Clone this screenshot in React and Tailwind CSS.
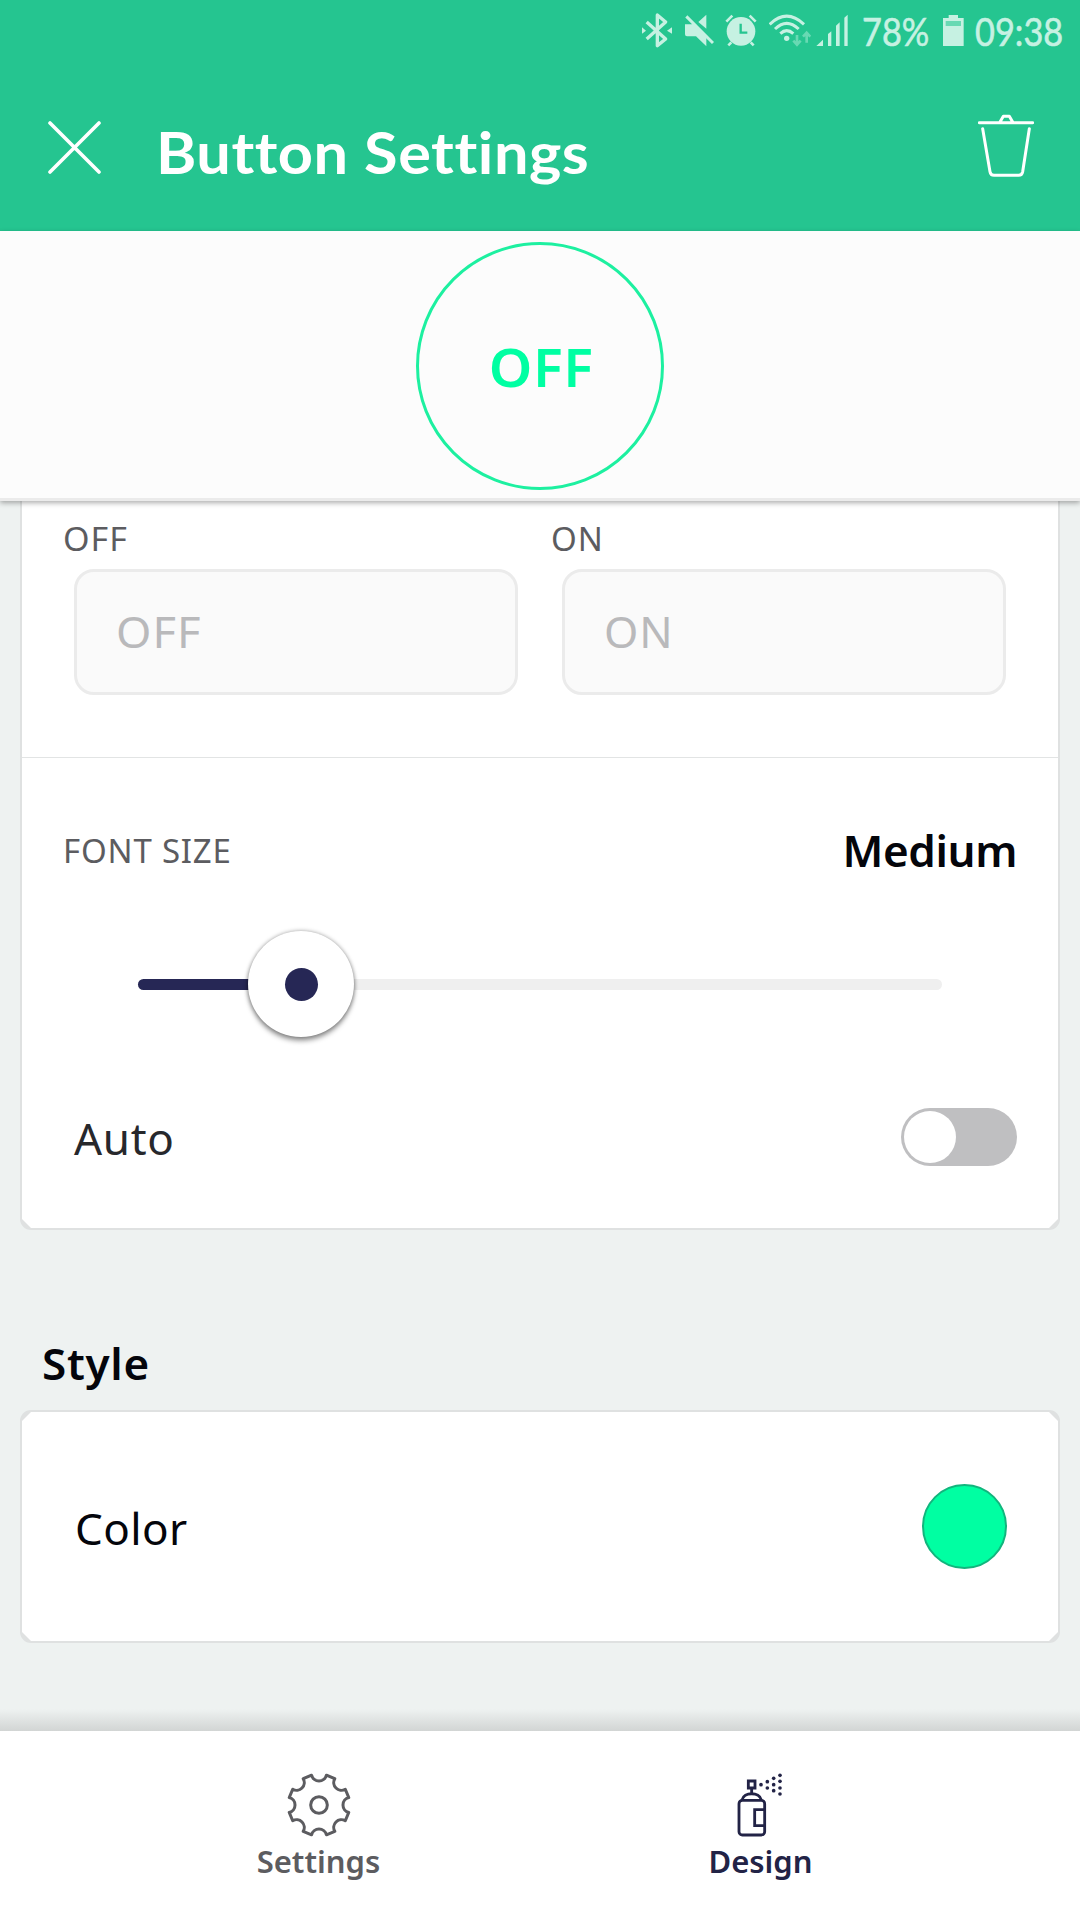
import React from "react";

const NOTO = "font-['Noto_Sans',sans-serif] leading-none whitespace-nowrap";

function StatusBar() {
  return (
    <div className="flex h-[62px] items-start pl-[642px] pt-[13px] text-[#c6f1e2]">
      <svg className="h-9 w-[30px] shrink-0" viewBox="36 39 90 108" fill="none" stroke="currentColor" strokeWidth="10">
        <path d="M50 66 L107 117 L82 137 V45 L107 66 L50 117" strokeLinejoin="round" />
        <path d="M36 82 L48 92 L36 101Z M126 82 L111 92 L126 101Z" fill="currentColor" stroke="none" />
      </svg>
      <svg className="ml-3 h-9 w-[30px] shrink-0" viewBox="162 39 90 108">
        <path d="M165 73 H184 L192 71 L229 108 V139 L198 109 H171 Q165 109 165 103Z M229 44 V86 L205 66Z" fill="currentColor" />
        <path d="M169 49 L249 129" stroke="currentColor" strokeWidth="9" />
      </svg>
      <svg className="ml-[11px] h-9 w-8 shrink-0" viewBox="285 39 96 108" fill="none" stroke="currentColor">
        <circle cx="333" cy="94" r="43" fill="currentColor" stroke="none" />
        <path d="M289 65 L307 47 M377 65 L359 47 M304 127 L295 136 M362 127 L371 136" strokeWidth="8" />
        <path d="M332 71 V98 H352" stroke="#25c590" strokeWidth="7" />
      </svg>
      <svg className="ml-3 h-9 w-[42px] shrink-0" viewBox="417 39 126 108" fill="none" stroke="currentColor">
        <path d="M419 73 Q470 24 522 73 M435 87 Q470 53 506 87 M451 101 Q470 83 490 101" strokeWidth="9" />
        <circle cx="470" cy="115" r="8" fill="currentColor" stroke="none" />
        <path d="M501 105 V132 M490 122 L501 134 L512 122 M530 128 V100 M519 110 L530 98 L541 110" stroke="#68d9b3" strokeWidth="8" />
      </svg>
      <svg className="ml-[5px] h-9 w-[33px] shrink-0" viewBox="558 39 99 108" fill="currentColor">
        <path d="M559 138 L579 119 V138Z M594 102 L604 94 V138 H594Z M618 77 L629 67 V138 H618Z M643 53 L653 44 V138 H643Z" />
      </svg>
      <span className="-mt-px ml-[13px] w-20 origin-left scale-x-[0.88] font-[Lato,sans-serif] text-[39px] leading-[38px] [-webkit-text-stroke:0.6px_#c6f1e2]">78%</span>
      <svg className="h-9 w-[23px] shrink-0" viewBox="936 39 69 108" fill="currentColor">
        <path d="M956 54 V45 H984 V54 H1001 V138 H939 V54Z" />
        <path d="M947 63 H993 V78 H947Z" fill="#68d9b3" />
      </svg>
      <span className="-mt-px ml-[10px] origin-left scale-x-[0.88] font-[Lato,sans-serif] text-[39px] leading-[38px] [-webkit-text-stroke:0.6px_#c6f1e2]">09:38</span>
    </div>
  );
}

function Header() {
  return (
    <header className="h-[231px] bg-[#25c590]">
      <StatusBar />
      <div className="flex h-[169px] items-start px-12">
        <svg className="mt-[59px] size-[53px]" viewBox="0 0 53 53" stroke="white" strokeWidth="3.6" strokeLinecap="round">
          <path d="M2 2 L51 51 M51 2 L2 51" />
        </svg>
        <h1 className="ml-[55px] mt-[62px] origin-left scale-x-[1.075] whitespace-nowrap font-[Lato,sans-serif] text-[57px] font-bold leading-none tracking-[0.5px] text-white">Button Settings</h1>
        <svg className="ml-auto mr-[-2px] mt-[51px] h-[66px] w-[56px]" viewBox="114 69 168 198" fill="none" stroke="white" strokeWidth="9" strokeLinecap="round" strokeLinejoin="round">
          <path d="M118 98 H278 M180 96 L190 79 H208 L218 96 M128 116 L150 245 Q152 256 162 256 H236 Q246 256 248 245 L268 116" />
        </svg>
      </div>
    </header>
  );
}

function Preview() {
  return (
    <section className="relative z-10 flex h-[270px] items-start justify-center border-b-[3px] border-[#ebebeb] bg-[#fcfcfc] pt-[11px] shadow-[0_2px_5px_rgba(0,0,0,0.32)]">
      <div className="flex size-[248px] justify-center rounded-full border-[3px] border-[#1df0a0] pt-[95px]">
        <span className={`${NOTO} scale-x-[1.045] pl-[2px] text-[53px] font-semibold tracking-[0.5px] text-[#00ffa2]`}>OFF</span>
      </div>
    </section>
  );
}

function LabelledInput({ label, placeholder, spacing }) {
  return (
    <div className="w-[453px]">
      <div className={`${NOTO} text-[33px] text-[#5c5c60] ${spacing}`}>{label}</div>
      <div className="ml-[11px] mt-[14px] flex h-[126px] w-[444px] rounded-[20px] border-[3px] border-[#ebebeb] bg-[#fafafa] pl-[39px] pt-[37px]">
        <span className={`${NOTO} text-[44px] text-[#b9b9bb] ${spacing}`}>{placeholder}</span>
      </div>
    </div>
  );
}

function SizeSlider() {
  return (
    <div className="relative ml-[116px] mt-[59px] flex h-[106px] w-[804px] items-center">
      <div className="flex h-[11px] w-full rounded-full bg-[#efefef]">
        <div className="h-full w-[163px] rounded-l-full bg-[#262755]" />
      </div>
      <div className="absolute left-[110px] top-0 flex size-[106px] items-center justify-center rounded-full bg-white shadow-[0_4px_5px_rgba(0,0,0,0.36),0_0_4px_rgba(0,0,0,0.36)]">
        <div className="size-[33px] rounded-full bg-[#262755]" />
      </div>
    </div>
  );
}

function TextCard() {
  return (
    <section className="mx-5 h-[729px] rounded-b-[11px] bg-[#dfe1e1] px-[2px] pb-[2px]">
      <div className="h-full bg-white [clip-path:polygon(0_0,100%_0,100%_calc(100%-9px),calc(100%-9px)_100%,9px_100%,0_calc(100%-9px))]">
        <div className="flex h-[257px] gap-[35px] border-b border-[#e2e4e4] pl-[41px] pt-[21px]">
          <LabelledInput label="OFF" placeholder="OFF" spacing="origin-left scale-x-[1.03] tracking-[1px]" />
          <LabelledInput label="ON" placeholder="ON" spacing="tracking-[1px]" />
        </div>
        <div className="flex items-start justify-between pl-[41px] pr-[41px]">
          <span className={`${NOTO} mt-[76px] text-[33px] tracking-[0.8px] text-[#5c5c60]`}>FONT SIZE</span>
          <span className={`${NOTO} mt-[70px] text-[44px] font-semibold tracking-[-0.4px] text-[#04050b]`}>Medium</span>
        </div>
        <SizeSlider />
        <div className="mt-[71px] flex items-start justify-between pl-[52px] pr-[41px]">
          <span className={`${NOTO} mt-[8px] text-[44px] tracking-[0.7px] text-[#27282c]`}>Auto</span>
          <div className="h-[58px] w-[116px] rounded-full bg-[#bfbfc1] p-[3px]">
            <div className="size-[52px] rounded-full bg-white" />
          </div>
        </div>
      </div>
    </section>
  );
}

function StyleCard() {
  return (
    <section className="mx-5 h-[233px] rounded-[11px] bg-[#dfe1e1] p-[2px]">
      <div className="flex h-full items-start justify-between bg-white pl-[53px] pr-[51px] [clip-path:polygon(9px_0,calc(100%-9px)_0,100%_9px,100%_calc(100%-9px),calc(100%-9px)_100%,9px_100%,0_calc(100%-9px),0_9px)]">
        <span className={`${NOTO} mt-[94px] text-[44px] tracking-[0.4px] text-[#04050b]`}>Color</span>
        <div className="mt-[72px] size-[85px] rounded-full border-2 border-[#12b57d] bg-[#00ffa2]" />
      </div>
    </section>
  );
}

// Gear outline: eight teeth separated by concave notches, centred on the origin.
const gearPoint = (deg) => {
  const a = (deg * Math.PI) / 180;
  return `${(92 * Math.sin(a)).toFixed(1)} ${(-92 * Math.cos(a)).toFixed(1)}`;
};
const GEAR =
  [0, 45, 90, 135, 180, 225, 270, 315]
    .map((d, i) => `${i ? "L" : "M"}${gearPoint(d - 14)} A23 23 0 0 0 ${gearPoint(d + 14)}`)
    .join(" ") + "Z";

const SPRAY_DOTS = [[246, 222], [265, 213], [265, 232], [284, 203], [284, 222], [284, 240], [303, 194], [303, 212], [303, 232], [303, 250]];

function BottomNav() {
  return (
    <nav className="flex h-[189px] bg-white pl-[98px] pt-[42px]">
      <div className="flex w-[441px] flex-col items-center">
        <svg className="size-16" viewBox="-96 -96 192 192" fill="none" stroke="#5c5c60" strokeWidth="9" strokeLinejoin="round">
          <path d={GEAR} />
          <circle r="25" />
        </svg>
        <span className={`${NOTO} mt-[9px] text-[31px] font-semibold text-[#5c5c60]`}>Settings</span>
      </div>
      <div className="flex w-[443px] flex-col items-center">
        <svg className="-ml-px h-16 w-[48px]" viewBox="171 187 144 192" fill="none" stroke="#222346" strokeWidth="8.5">
          <path d="M208 211 H228 V232 H208Z M218 235 V249 M189 268 C194 243 242 243 247 268 M257 297 H227 V345 H257" />
          <rect x="180" y="269" width="77" height="104" rx="10" />
          {SPRAY_DOTS.map(([x, y]) => (
            <circle key={`${x}-${y}`} cx={x} cy={y} r="5.5" fill="#222346" stroke="none" />
          ))}
        </svg>
        <span className={`${NOTO} mt-[9px] text-[31px] font-semibold text-[#222346]`}>Design</span>
      </div>
    </nav>
  );
}

export default function App() {
  return (
    <div className="flex h-[1920px] w-[1080px] flex-col overflow-hidden bg-[#eef2f1]">
      <Header />
      <Preview />
      <TextCard />
      <h2 className={`${NOTO} ml-[42px] mt-[111px] h-[69px] text-[44px] font-semibold tracking-[0.7px] text-[#04050b]`}>Style</h2>
      <StyleCard />
      <div className="mt-auto h-[22px] bg-gradient-to-b from-[#eef2f1] to-[#d2d5d4]" />
      <BottomNav />
    </div>
  );
}
